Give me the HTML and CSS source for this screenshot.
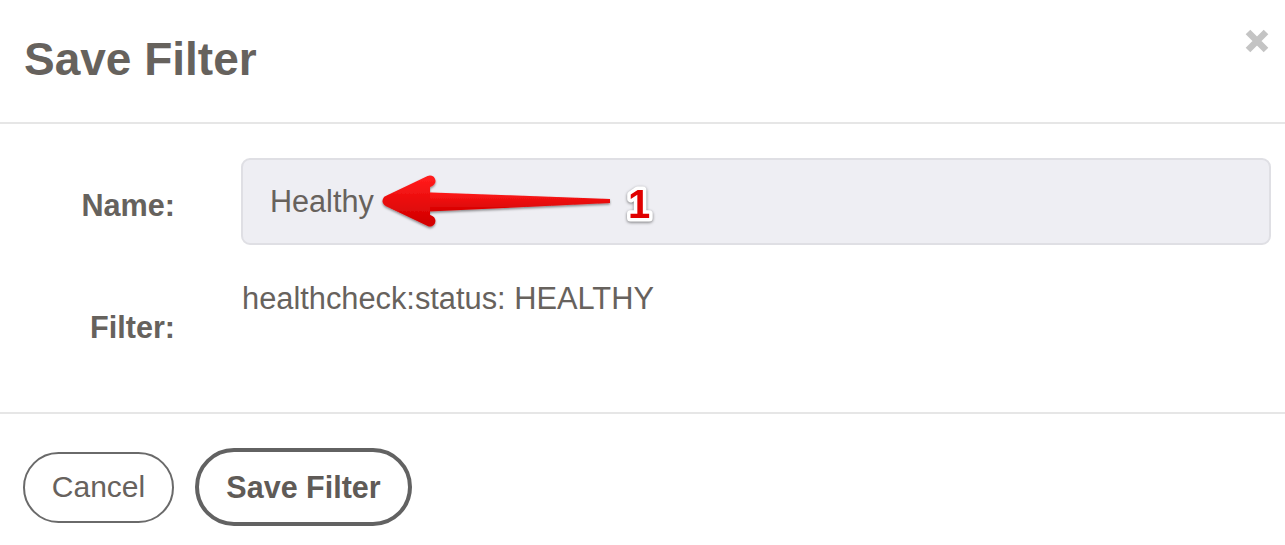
FILE: index.html
```html
<!DOCTYPE html>
<html lang="en">
<head>
<meta charset="utf-8">
<title>Save Filter</title>
<link rel="stylesheet" href="styles.css">
</head>
<body>
<div class="modal">
  <header class="modal-header">
    <h1 class="modal-title">Save Filter</h1>
    <button class="close" aria-label="Close">
      <svg width="24" height="24" viewBox="0 0 24 24"><path d="M3 3 L21 21 M21 3 L3 21" stroke="#c4c4c4" stroke-width="6.5" fill="none"/></svg>
    </button>
  </header>
  <section class="modal-body">
    <div class="form-grid">
      <label class="label" for="name">Name:</label>
      <div class="input" id="name">Healthy</div>
      <div class="label label-filter">Filter:</div>
      <div class="value">healthcheck:status: HEALTHY</div>
    </div>
  </section>
  <footer class="modal-footer">
    <button class="btn btn-cancel">Cancel</button>
    <button class="btn btn-primary">Save Filter</button>
  </footer>
</div>
<svg class="annotation" width="1285" height="545" viewBox="0 0 1285 545">
  <defs>
    <linearGradient id="red" x1="0" y1="0" x2="0" y2="1">
      <stop offset="0" stop-color="#ff1a1a"/>
      <stop offset="1" stop-color="#d40000"/>
    </linearGradient>
    <filter id="sh" x="-10%" y="-30%" width="120%" height="160%">
      <feDropShadow dx="0" dy="1.5" stdDeviation="1.2" flood-color="#000" flood-opacity="0.45"/>
    </filter>
  </defs>
  <g filter="url(#sh)">
    <polygon points="418,192 610,199 610,203 418,212" fill="url(#red)"/>
    <polygon points="387,201 430,180 430,222" fill="url(#red)"/>
    <path d="M388 201 L430 181 M388 201 L430 221" stroke="url(#red)" stroke-width="11" stroke-linecap="round" fill="none"/>
  </g>
  <text x="639" y="218" class="num" text-anchor="middle">1</text>
</svg>
</body>
</html>
```

FILE: styles.css
```css
* { box-sizing: border-box; }
html, body { margin: 0; padding: 0; background: #fff; }
body {
  font-family: "Liberation Sans", Arial, sans-serif;
  color: #67625d;
  width: 1285px;
  height: 545px;
  overflow: hidden;
  position: relative;
}
.modal { width: 1285px; }
.modal-header {
  position: relative;
  padding: 33px 24px 37px 24px;
  border-bottom: 2px solid #e6e6e6;
}
.modal-title {
  margin: 0;
  font-size: 46px;
  line-height: 52px;
  font-weight: bold;
  color: #66625d;
}
.close {
  position: absolute;
  top: 29px;
  right: 16px;
  width: 24px;
  height: 24px;
  padding: 0;
  border: 0;
  background: none;
}
.close svg { display: block; }
.modal-body {
  padding: 34px 14px 67px 24px;
}
.form-grid {
  display: grid;
  grid-template-columns: 151px 1fr;
  column-gap: 66px;
  row-gap: 36px;
}
.label {
  text-align: right;
  font-weight: bold;
  font-size: 30.6px;
  line-height: 36px;
  padding-top: 29px;
  color: #66625d;
}
.label-filter { padding-top: 28px; }
.input {
  height: 87px;
  background: #eeeef3;
  border: 2px solid #dfdfe4;
  border-radius: 9px;
  font-size: 30.6px;
  line-height: 36px;
  padding: 23px 27px;
  color: #67625d;
}
.value {
  font-size: 30.8px;
  line-height: 36px;
  padding-left: 1px;
}
.modal-footer {
  border-top: 2px solid #e6e6e6;
  padding: 34px 24px 0 23px;
  display: flex;
  align-items: center;
  gap: 21px;
}
.btn {
  font-family: "Liberation Sans", Arial, sans-serif;
  font-size: 30px;
  line-height: 36px;
  color: #67625d;
  background: #fff;
  border-radius: 40px;
  margin: 0;
  white-space: nowrap;
}
.btn-cancel {
  border: 2px solid #6a6a6a;
  padding: 15px 0 16px;
  width: 151px;
  height: 71px;
}
.btn-primary {
  border: 4px solid #626262;
  font-weight: bold;
  font-size: 30.5px;
  padding: 17px 0;
  width: 217px;
  height: 78px;
  color: #5f5b57;
}
.annotation {
  position: absolute;
  left: 0;
  top: 0;
  pointer-events: none;
}
.num {
  font-family: "Liberation Sans", Arial, sans-serif;
  font-weight: bold;
  font-size: 40px;
  fill: #e00000;
  stroke: #fff;
  stroke-width: 7px;
  stroke-linejoin: round;
  paint-order: stroke;
  filter: drop-shadow(0 1px 1.5px rgba(0,0,0,0.5));
}
```
